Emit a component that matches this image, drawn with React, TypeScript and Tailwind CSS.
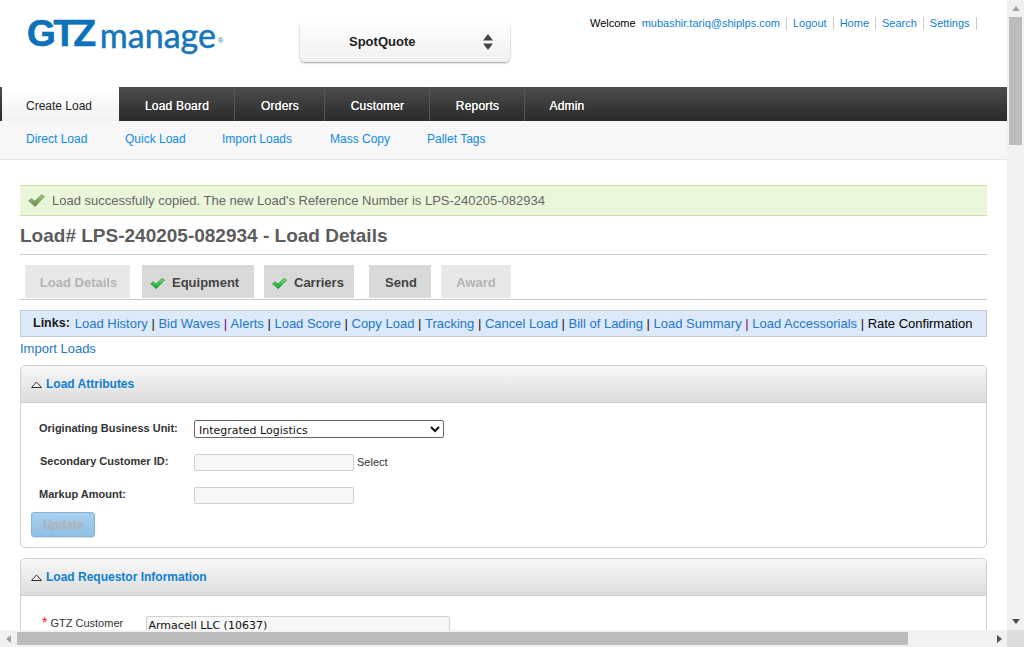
import { Fragment } from "react";

const NAV = [
  { label: "Load Board", w: "w-[116px]" },
  { label: "Orders", w: "w-[90px]" },
  { label: "Customer", w: "w-[105px]" },
  { label: "Reports", w: "w-[95px]" },
  { label: "Admin", w: "w-[83px]" },
];

const SUBNAV = [
  { label: "Direct Load", w: "w-[99px]" },
  { label: "Quick Load", w: "w-[97px]" },
  { label: "Import Loads", w: "w-[108px]" },
  { label: "Mass Copy", w: "w-[97px]" },
  { label: "Pallet Tags", w: "w-[80px]" },
];

const LINKS = [
  "Load History",
  "Bid Waves",
  "Alerts",
  "Load Score",
  "Copy Load",
  "Tracking",
  "Cancel Load",
  "Bill of Lading",
  "Load Summary",
  "Load Accessorials",
];

const TOP_LINKS = ["mubashir.tariq@shiplps.com", "Logout", "Home", "Search", "Settings"];

function Check({ green }: { green?: boolean }) {
  const id = green ? "check-green" : "check-olive";
  return (
    <svg width={green ? 15 : 17} height="13" viewBox="0 0 17 13" className="shrink-0">
      <defs>
        <linearGradient id={id} x1="0" y1="0" x2="0" y2="1">
          <stop offset="0" stopColor={green ? "#6fe06a" : "#a9c98c"} />
          <stop offset="1" stopColor={green ? "#17a32c" : "#5f8a45"} />
        </linearGradient>
      </defs>
      <path
        d="M0.7 6.8 L3.6 4.6 L6.8 7.2 L13.6 0.8 L16.4 2.6 L7.2 12.4 Z"
        fill={`url(#${id})`}
        stroke={green ? "#178a2a" : "#64844c"}
        strokeWidth="0.7"
        strokeLinejoin="round"
      />
    </svg>
  );
}

function Caret() {
  return (
    <svg width="11" height="7" viewBox="0 0 11 7" className="shrink-0">
      <path d="M0.5 6.5 L5.5 1 L10.5 6.5 Z" fill="#f2f2f2" stroke="#333" strokeWidth="1" />
    </svg>
  );
}

function PanelHeader({ title }: { title: string }) {
  return (
    <div className="flex h-[37px] items-center gap-[4px] rounded-t-[5px] border-b border-[#cfcfcf] bg-gradient-to-b from-[#f8f8f8] to-[#dcdcdc] pl-[10px]">
      <Caret />
      <a className="text-[12px] font-bold text-[#0f7fd0]">{title}</a>
    </div>
  );
}

function FieldInput() {
  return <div className="h-[17px] w-[160px] rounded-[2px] border border-[#cfcfcf] bg-[#f7f7f7]" />;
}

export default function App() {
  return (
    <div className="flex h-[647px] w-[1024px] overflow-hidden bg-white font-['Liberation_Sans',Arial,sans-serif]">
      <div className="flex w-[1007px] flex-col">
        <div className="h-[630px] overflow-hidden">
          {/* Header */}
          <div className="flex h-[87px]">
            <div className="flex w-[300px] items-start pl-[27px] pt-[11px] text-[#0b72b9]">
              <span className="text-[37px] font-bold leading-[46px] tracking-[-2.4px] [-webkit-text-stroke:0.7px_#0b72b9]">GTZ</span>
              <span className="ml-[6px] font-['Lato',sans-serif] text-[34px] leading-[47px] text-[#1776bb] [-webkit-text-stroke:0.5px_#1776bb]">manage</span>
              <span className="ml-[2px] mt-[25px] text-[7px]">®</span>
            </div>
            <div className="mt-[22px] flex h-[40px] w-[210px] items-center rounded-[5px] bg-gradient-to-b from-white to-[#f0f0f0] pl-[49px] pr-[17px] shadow-[0_1px_2px_rgba(0,0,0,0.4)]">
              <span className="flex-1 text-[13px] font-bold text-[#222]">SpotQuote</span>
              <svg width="10" height="16" viewBox="0 0 10 16">
                <path d="M5 0 L10 6.5 L0 6.5 Z M0 9.5 L10 9.5 L5 16 Z" fill="#444" />
              </svg>
            </div>
            <div className="ml-[80px] mt-[16px] flex h-[14px] items-center text-[11px]">
              <span className="text-black">Welcome</span>
              {TOP_LINKS.map((l) => (
                <a key={l} className="flex h-[13px] items-center border-r border-[#cccccc] px-[6px] text-[#0f7fd0]">
                  {l}
                </a>
              ))}
            </div>
          </div>

          {/* Main nav */}
          <div className="flex h-[34px] bg-gradient-to-b from-[#4d4d4d] to-[#2a2a2a] pl-[2px]">
            <div className="flex w-[117px] items-center justify-center bg-gradient-to-b from-white to-[#f2f2f2] pr-[3px] pt-[3px] text-[12px] text-[#222]">
              Create Load
            </div>
            {NAV.map((n) => (
              <div
                key={n.label}
                className={`${n.w} flex items-center justify-center border-r border-[#555] pl-[1px] pt-[3px] text-[12px] tracking-[0.2px] text-white [text-shadow:0_0_0.6px_#fff] last:border-r-0`}
              >
                {n.label}
              </div>
            ))}
          </div>

          {/* Sub nav */}
          <div className="flex h-[39px] items-center border-b border-[#e5e5e5] bg-[#f7f7f7] pb-[2px] pl-[26px] text-[12px] text-[#0f8ae6]">
            {SUBNAV.map((s) => (
              <a key={s.label} className={s.w}>
                {s.label}
              </a>
            ))}
          </div>

          <div className="px-[20px] pt-[25px]">
            <div className="flex h-[31px] items-center gap-[7px] border-y border-[#c6e0a4] bg-[#e9f6d9] pl-[8px] text-[13px] text-[#666]">
              <Check />
              <span>Load successfully copied. The new Load's Reference Number is LPS-240205-082934</span>
            </div>

            <h1 className="flex h-[39px] items-center border-b border-[#cccccc] pt-[3px] text-[19px] font-bold text-[#5c5c5c]">
              Load# LPS-240205-082934 - Load Details
            </h1>

            <div className="flex h-[45px] items-end border-b border-[#c8c8c8] pb-[1px] pl-[5px] text-[13px] font-bold">
              <div className="flex h-[33px] w-[105px] items-center justify-center bg-[#e8e8e8] pl-[2px] pt-[3px] text-[#b4b4b4]">Load Details</div>
              <div className="ml-[12px] flex h-[33px] w-[112px] items-center gap-[7px] bg-[#d9d9d9] pl-[8px] pt-[3px] text-[#444]">
                <Check green />
                Equipment
              </div>
              <div className="ml-[10px] flex h-[33px] w-[90px] items-center gap-[7px] bg-[#d9d9d9] pl-[8px] pt-[3px] text-[#444]">
                <Check green />
                Carriers
              </div>
              <div className="ml-[15px] flex h-[33px] w-[62px] items-center justify-center bg-[#d9d9d9] pl-[2px] pt-[3px] text-[#444]">Send</div>
              <div className="ml-[10px] flex h-[33px] w-[70px] items-center justify-center bg-[#e8e8e8] pt-[3px] text-[#b4b4b4]">Award</div>
            </div>

            <div className="mt-[10px] flex h-[27px] items-center whitespace-nowrap border border-[#c4c8cc] bg-[#dce9f8] pl-[12px] text-[13px] text-[#1a1a1a]">
              <b className="mr-[5px] text-[12.5px]">Links:</b>
              {LINKS.map((l, i) => (
                <Fragment key={l}>
                  <a className="text-[#2277cc]">{l}</a>
                  <span className={`mx-[3.6px] ${i === 1 || i === 8 ? "text-[#800080]" : ""}`}>|</span>
                </Fragment>
              ))}
              <span className="text-black">Rate Confirmation</span>
            </div>

            <a className="mt-[4px] block h-[24px] text-[13px] leading-[15px] text-[#2277cc]">Import Loads</a>

            {/* Load Attributes */}
            <div className="h-[183px] rounded-[5px] border border-[#cfcfcf]">
              <PanelHeader title="Load Attributes" />
              <div className="grid grid-cols-[173px_1fr] items-center pt-[17px] text-[11px] font-bold text-[#333]">
                <div className="h-[18px] pl-[18px] leading-[16px]">Originating Business Unit:</div>
                <select
                  defaultValue="Integrated Logistics"
                  className="h-[18px] w-[250px] rounded-[2px] border border-[#666] bg-white pt-[2px] font-['DejaVu_Sans',sans-serif] text-[11px] font-normal text-[#111]"
                >
                  <option>Integrated Logistics</option>
                </select>
                <div className="mt-[15px] h-[18px] pl-[19px] leading-[16px]">Secondary Customer ID:</div>
                <div className="mt-[15px] flex items-center gap-[3px]">
                  <FieldInput />
                  <span className="text-[11px] font-normal">Select</span>
                </div>
                <div className="mt-[15px] h-[18px] pl-[18px] leading-[16px]">Markup Amount:</div>
                <div className="mt-[15px]">
                  <FieldInput />
                </div>
              </div>
              <button
                type="button"
                className="ml-[10px] mt-[8px] h-[25px] w-[64px] rounded-[3px] border border-[#7fb4dc] bg-gradient-to-b from-[#a9d0ee] to-[#8fc0e4] text-[12px] font-bold text-[#a8b4bc] shadow-[0_1px_1px_rgba(0,0,0,0.15)] [text-shadow:0_0_1px_#b0b8be]"
              >
                Update
              </button>
            </div>

            {/* Load Requestor Information */}
            <div className="mt-[10px] h-[120px] rounded-t-[5px] border border-[#cfcfcf]">
              <PanelHeader title="Load Requestor Information" />
              <div className="flex items-start pl-[21px] pt-[20px]">
                <span className="text-[14px] leading-[12px] text-[#ee1111]">*</span>
                <span className="ml-[3px] w-[96px] text-[11px] leading-[14px] text-[#333]">GTZ Customer</span>
                <input
                  readOnly
                  value="Armacell LLC (10637)"
                  className="h-[18px] w-[304px] rounded-[2px] border border-[#cfcfcf] bg-[#f7f7f7] pl-[1px] font-['DejaVu_Sans',sans-serif] text-[11px] text-[#111]"
                />
              </div>
            </div>
          </div>
        </div>

        {/* Horizontal scrollbar */}
        <div className="flex h-[17px] items-center bg-[#f1f1f1]">
          <div className="flex w-[17px] justify-center">
            <svg width="5" height="8" viewBox="0 0 5 8"><path d="M5 0 V8 L0 4 Z" fill="#a0a0a0" /></svg>
          </div>
          <div className="h-[13px] w-[891px] bg-[#bcbcbc]" />
          <div className="flex flex-1 justify-end pr-[5px]">
            <svg width="5" height="8" viewBox="0 0 5 8"><path d="M0 0 V8 L5 4 Z" fill="#505050" /></svg>
          </div>
        </div>
      </div>

      {/* Vertical scrollbar */}
      <div className="flex w-[17px] flex-col items-center bg-[#f1f1f1]">
        <div className="flex h-[17px] items-center justify-center">
          <svg width="8" height="5" viewBox="0 0 8 5"><path d="M0 5 H8 L4 0 Z" fill="#a0a0a0" /></svg>
        </div>
        <div className="h-[128px] w-[13px] bg-[#bcbcbc]" />
        <div className="mt-[467px] flex h-[18px] items-center justify-center">
          <svg width="8" height="5" viewBox="0 0 8 5"><path d="M0 0 H8 L4 5 Z" fill="#505050" /></svg>
        </div>
        <div className="h-[17px] w-full bg-[#dcdcdc]" />
      </div>
    </div>
  );
}
